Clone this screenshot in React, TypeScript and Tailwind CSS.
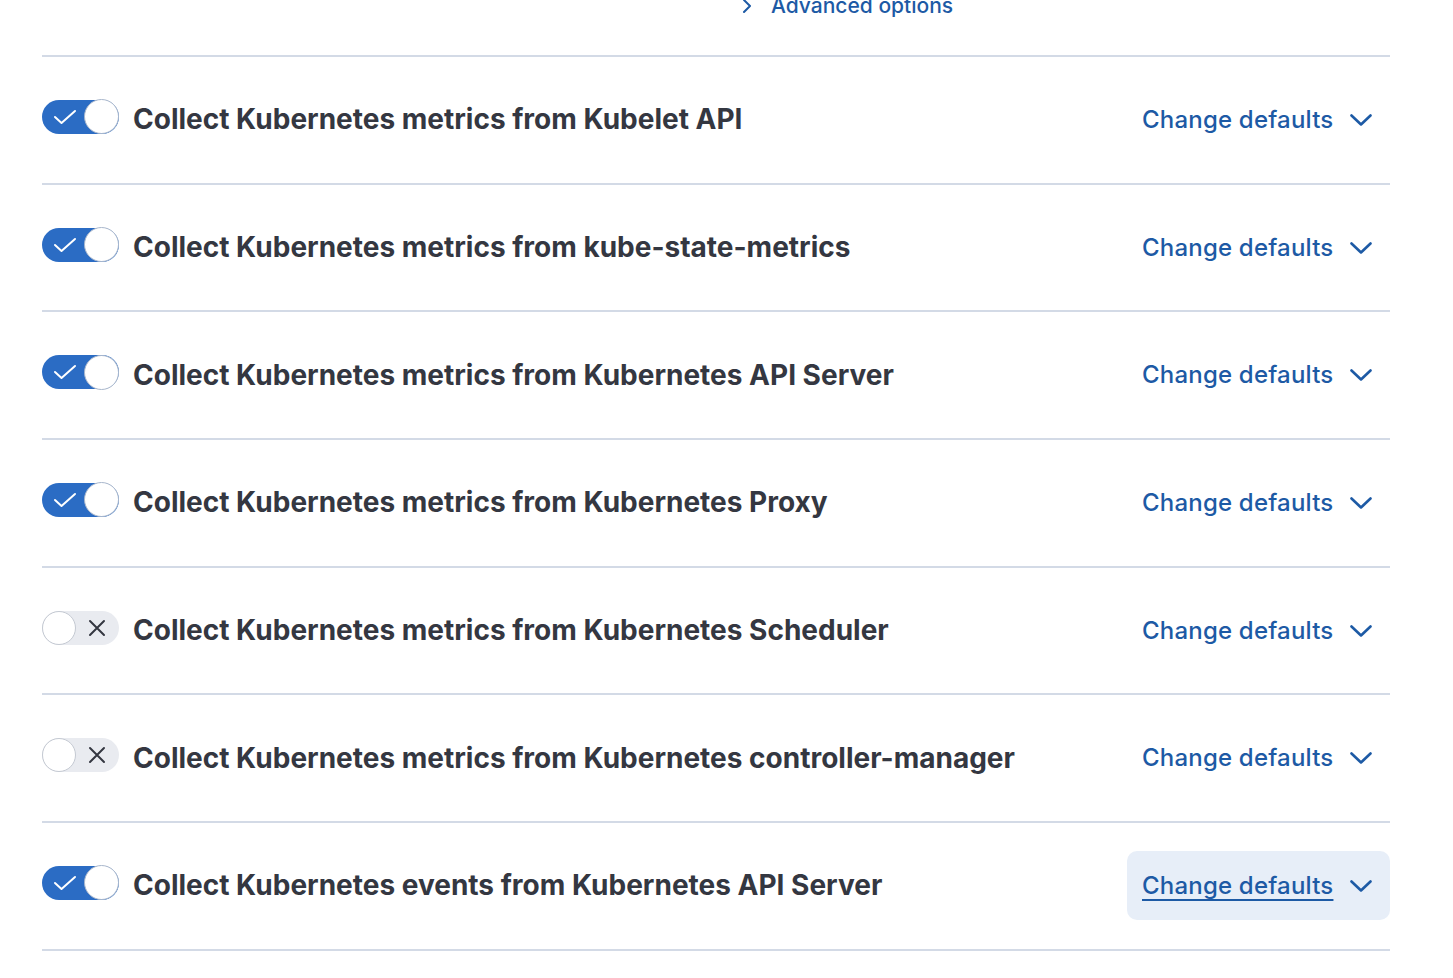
import React from 'react';

const rows = [
  { label: 'Collect Kubernetes metrics from Kubelet API', on: true },
  { label: 'Collect Kubernetes metrics from kube-state-metrics', on: true },
  { label: 'Collect Kubernetes metrics from Kubernetes API Server', on: true },
  { label: 'Collect Kubernetes metrics from Kubernetes Proxy', on: true },
  { label: 'Collect Kubernetes metrics from Kubernetes Scheduler', on: false },
  { label: 'Collect Kubernetes metrics from Kubernetes controller-manager', on: false },
  { label: 'Collect Kubernetes events from Kubernetes API Server', on: true, focused: true },
];

const Toggle = ({ on }: { on: boolean }) =>
  on ? (
    <div className="flex h-[34px] w-[77px] shrink-0 items-center justify-between rounded-full bg-[#2b6cc4] mb-[6px]">
      <svg width="24" height="16" viewBox="0 0 24 16" className="ml-[11px]">
        <path d="M2 8l6.5 6L22 2" fill="none" stroke="#fff" strokeWidth="2" strokeLinecap="round" strokeLinejoin="round" />
      </svg>
      <div className="h-[35px] w-[35px] rounded-full border border-[#a9b7cc] bg-white" />
    </div>
  ) : (
    <div className="flex h-[34px] w-[77px] shrink-0 items-center justify-between rounded-full bg-[#e9ebf0] mb-[6px]">
      <div className="h-[34px] w-[34px] rounded-full border border-[#c4c9d2] bg-white" />
      <svg width="18" height="18" viewBox="0 0 18 18" className="mr-[13px]">
        <path d="M2 2l14 14M16 2L2 16" fill="none" stroke="#343741" strokeWidth="2" strokeLinecap="round" />
      </svg>
    </div>
  );

const ChangeDefaults = ({ focused }: { focused?: boolean }) => (
  <div
    className={`flex h-[69px] w-[263px] shrink-0 items-center justify-between rounded-[10px] pl-[15px] pr-[18px] ${
      focused ? 'bg-[#e7eef8]' : ''
    }`}
  >
    <span
      className={`whitespace-nowrap text-[24px] font-medium tracking-[0.2px] text-[#1d5aa5] ${
        focused ? 'underline decoration-2 underline-offset-[5px]' : ''
      }`}
    >
      Change defaults
    </span>
    <svg width="22" height="12" viewBox="0 0 22 12">
      <path d="M1.5 1.5L11 10.5L20.5 1.5" fill="none" stroke="#1d5aa5" strokeWidth="2.6" strokeLinecap="round" strokeLinejoin="round" />
    </svg>
  </div>
);

export default function App() {
  return (
    <div className="min-h-screen bg-white px-[42px] font-['Inter',sans-serif]">
      <div className="w-[1348px]">
        <div className="flex h-[57px] items-start border-b-2 border-[#d3dae6] pl-[699px]">
          <div className="-mt-[10px] flex items-center gap-[18px] text-[#1d5aa5]">
            <svg width="12" height="18" viewBox="0 0 12 18">
              <path d="M3 3l6 6-6 6" fill="none" stroke="#1d5aa5" strokeWidth="2" strokeLinecap="round" strokeLinejoin="round" />
            </svg>
            <span className="whitespace-nowrap text-[21px] font-medium">Advanced options</span>
          </div>
        </div>
        {rows.map((r) => (
          <div key={r.label} className="flex h-[127.7px] items-center justify-between border-b-2 border-[#d3dae6]">
            <div className="flex items-center gap-[14px]">
              <Toggle on={r.on} />
              <span className="mt-[-1px] whitespace-nowrap text-[28px] font-bold text-[#343741]">{r.label}</span>
            </div>
            <ChangeDefaults focused={r.focused} />
          </div>
        ))}
      </div>
    </div>
  );
}
